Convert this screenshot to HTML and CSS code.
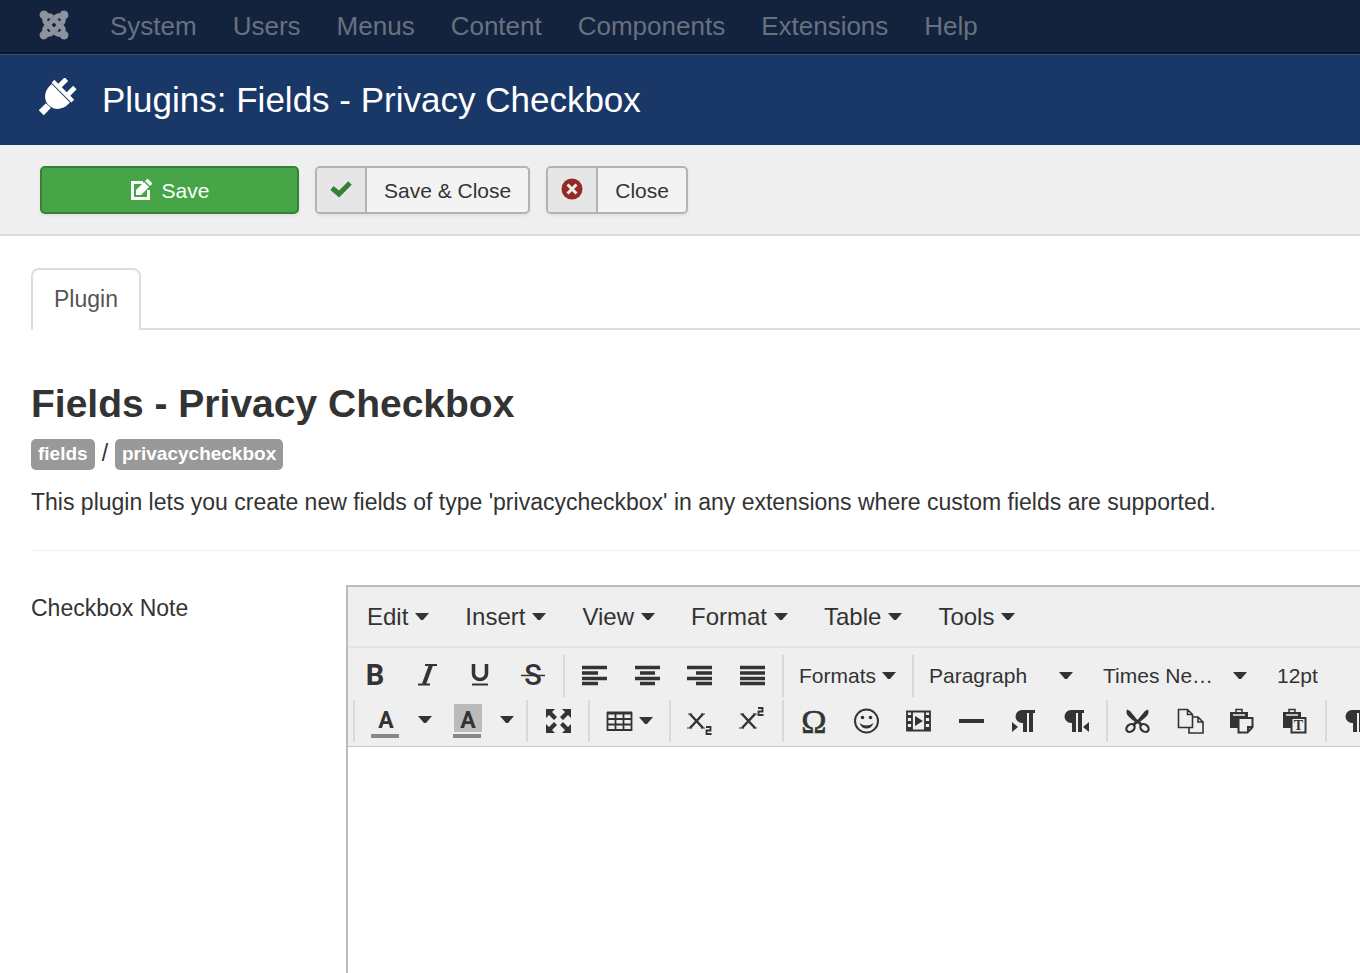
FILE: index.html
```html
<!DOCTYPE html>
<html lang="en">
<head>
<meta charset="utf-8">
<title>Plugins: Fields - Privacy Checkbox</title>
<link rel="stylesheet" href="styles.css">
</head>
<body>
<svg class="defs" aria-hidden="true">
  <symbol id="caret" viewBox="0 0 14 8"><path d="M0 0h14L8 7H6z"/></symbol>
  <symbol id="pilcrow" viewBox="0 0 20 22"><path d="M7 0h13v3h-2v19h-4V3h-2v19H8v-9H7A6.5 6.5 0 0 1 7 0z"/></symbol>
</svg>

<nav class="navbar" aria-label="Main">
  <a class="brand" href="#" aria-label="Joomla">
    <svg width="30" height="30" viewBox="-1 -1 26 26">
      <g id="arm"><path d="M16.719 14.759L14.22 17.26l-2.37 2.37-.462.466c-1.368 1.365-3.297 1.83-5.047 1.397-.327 1.424-1.604 2.49-3.13 2.49C1.438 23.983 0 22.547 0 20.772c0-1.518 1.055-2.789 2.469-3.123-.446-1.76.016-3.705 1.396-5.08l.179-.18 2.37 2.37-.184.181c-.769.779-.769 2.024 0 2.789.771.78 2.022.78 2.787 0l.465-.465 2.367-2.371 2.502-2.506z"/></g>
      <use href="#arm" transform="rotate(90 12 12)"/><use href="#arm" transform="rotate(180 12 12)"/><use href="#arm" transform="rotate(270 12 12)"/>
    </svg>
  </a>
  <a href="#">System</a><a href="#">Users</a><a href="#">Menus</a><a href="#">Content</a><a href="#">Components</a><a href="#">Extensions</a><a href="#">Help</a>
</nav>

<header class="header">
  <svg width="38" height="38" viewBox="0 0 38 38" aria-hidden="true">
    <g transform="translate(3 34) rotate(45)" fill="#fff">
      <path d="M-3.500 1v-10h7V1z"/>
      <path d="M-13-26.500h26v3c0 8-6 14-13 14s-13-6-13-14z"/>
      <path d="M-14-31.500h5.500v-9h5v9h7v-9h5v9H14v4h-28z"/>
    </g>
  </svg>
  <h1>Plugins: Fields - Privacy Checkbox</h1>
</header>

<div class="actions">
  <button class="btn btn-save" type="button">
    <svg width="22" height="22" viewBox="0 0 22 22" aria-hidden="true"><path d="M13 3.500H2.500V19.500H18.500V11" fill="none" stroke="#fff" stroke-width="3"/><path d="M6 16v-5l8-8 5 5-8 8zM15 2l2-2h1l4 4v1l-2 2z" fill="#fff"/></svg>
    <span>Save</span>
  </button>
  <button class="btn btn-split" type="button">
    <span class="btn-icon"><svg width="22" height="22" viewBox="0 0 22 22" aria-hidden="true"><path d="M2 10l7 6L20 5" fill="none" stroke="#378137" stroke-width="5"/></svg></span>
    <span class="btn-text">Save &amp; Close</span>
  </button>
  <button class="btn btn-split" type="button">
    <span class="btn-icon"><svg width="22" height="22" viewBox="0 0 22 22" aria-hidden="true"><circle cx="11" cy="11" r="10.500" fill="#942a25"/><path d="M6.500 6.500l9 9M15.500 6.500l-9 9" stroke="#eee" stroke-width="3"/></svg></span>
    <span class="btn-text">Close</span>
  </button>
</div>

<main class="content">
  <div class="tabs"><a class="tab" href="#">Plugin</a></div>
  <h2>Fields - Privacy Checkbox</h2>
  <div class="crumbs"><span class="badge">fields</span><span class="slash">/</span><span class="badge">privacycheckbox</span></div>
  <p class="desc">This plugin lets you create new fields of type 'privacycheckbox' in any extensions where custom fields are supported.</p>
  <hr>
  <div class="field">
    <label for="note">Checkbox Note</label>
    <div class="editor">
      <div class="menubar">
        <button type="button">Edit<svg class="caret"><use href="#caret"/></svg></button>
        <button type="button">Insert<svg class="caret"><use href="#caret"/></svg></button>
        <button type="button">View<svg class="caret"><use href="#caret"/></svg></button>
        <button type="button">Format<svg class="caret"><use href="#caret"/></svg></button>
        <button type="button">Table<svg class="caret"><use href="#caret"/></svg></button>
        <button type="button">Tools<svg class="caret"><use href="#caret"/></svg></button>
      </div>
      <div class="toolbar">
        <div class="row">
          <div class="group group-first">
            <button type="button" aria-label="Bold"><svg class="ico" viewBox="0 0 28 28"><text x="15" y="23" class="g-b">B</text></svg></button>
            <button type="button" aria-label="Italic"><svg class="ico" viewBox="0 0 28 28"><path d="M12 3h12M5 22.500h12" stroke-width="2"/><path d="M18 3L11 22" stroke-width="4"/></svg></button>
            <button type="button" aria-label="Underline"><svg class="ico" viewBox="0 0 28 28"><path d="M7.500 2v9.500a6.500 6 0 0 0 13 0V2" stroke-width="3.500"/><path d="M6 22.500h16" stroke-width="2"/></svg></button>
            <button type="button" aria-label="Strikethrough"><svg class="ico" viewBox="0 0 28 28"><text x="14" y="23" class="g-s">S</text><path d="M2 13.500h24" stroke-width="1.500"/></svg></button>
          </div>
          <div class="group n4">
            <button type="button" aria-label="Align left"><svg class="ico" viewBox="0 0 28 28"><path d="M2 5.500h25M2 11h16M2 16.500h25M2 21.500h16" stroke-width="3.500"/></svg></button>
            <button type="button" aria-label="Align center"><svg class="ico" viewBox="0 0 28 28"><path d="M2 5.500h25M7 11h15M2 16.500h25M7 21.500h15" stroke-width="3.500"/></svg></button>
            <button type="button" aria-label="Align right"><svg class="ico" viewBox="0 0 28 28"><path d="M2 5.500h25M11 11h16M2 16.500h25M11 21.500h16" stroke-width="3.500"/></svg></button>
            <button type="button" aria-label="Justify"><svg class="ico" viewBox="0 0 28 28"><path d="M2 5.500h25M2 11h25M2 16.500h25M2 21.500h25" stroke-width="3.500"/></svg></button>
          </div>
          <div class="group formats"><button type="button">Formats<svg class="caret"><use href="#caret"/></svg></button></div>
          <div class="group">
            <div class="listbox"><select aria-label="Block format"><option>Paragraph</option></select><svg class="caret"><use href="#caret"/></svg></div>
            <div class="listbox"><select aria-label="Font family"><option>Times Ne…</option></select><svg class="caret"><use href="#caret"/></svg></div>
            <div class="listbox"><select aria-label="Font size"><option>12pt</option></select><svg class="caret"><use href="#caret"/></svg></div>
          </div>
        </div>
        <div class="row row-second">
          <div class="group colors">
            <button type="button" aria-label="Text color"><svg class="ico tall" viewBox="0 0 28 34"><text x="15" y="24" class="g-a">A</text><path d="M0 32h28" class="bar"/></svg></button>
            <button class="open" type="button" aria-label="Text color options"><svg class="caret"><use href="#caret"/></svg></button>
            <button type="button" aria-label="Background color"><svg class="ico tall" viewBox="0 0 28 34"><path d="M1 0h28v28H1z" class="swatch"/><text x="15" y="24" class="g-a">A</text><path d="M0 32h28" class="bar"/></svg></button>
            <button class="open" type="button" aria-label="Background color options"><svg class="caret"><use href="#caret"/></svg></button>
          </div>
          <div class="group n1">
            <button type="button" aria-label="Fullscreen"><svg class="ico" viewBox="0 0 28 28"><path d="M2 2h9L8 5l5 5-3 3-5-5-3 3zM27 2v9l-3-3-5 5-3-3 5-5-3-3zM2 26v-9l3 3 5-5 3 3-5 5 3 3zM27 26h-9l3-3-5-5 3-3 5 5 3-3z" class="fill"/></svg></button>
          </div>
          <div class="group table">
            <button type="button" aria-label="Table"><svg class="ico" viewBox="0 0 28 28"><path d="M2.500 6h24v17h-24zM2 12h25M2 17.500h25M10.500 6v17M18.500 6v17" stroke-width="1.800"/><path d="M2 6h25" stroke-width="3"/></svg><svg class="caret"><use href="#caret"/></svg></button>
          </div>
          <div class="group n2">
            <button type="button" aria-label="Subscript"><svg class="ico" viewBox="0 0 28 28"><path d="M4 7l13 14M17 7L4 21" stroke-width="2.500"/><path d="M2 7h4M15 7h4M1 21h5M15 21h4" stroke-width="1"/><path d="M20 20h4.500v3.500h-4V27h5" stroke-width="1.800"/></svg></button>
            <button type="button" aria-label="Superscript"><svg class="ico" viewBox="0 0 28 28"><path d="M4 7l13 14M17 7L4 21" stroke-width="2.500"/><path d="M2 7h4M15 7h4M1 21h5M15 21h4" stroke-width="1"/><path d="M20 1h4.500v3.500h-4V8h5" stroke-width="1.800"/></svg></button>
          </div>
          <div class="group n6">
            <button type="button" aria-label="Special character"><svg class="ico" viewBox="0 0 28 28"><text x="15" y="26" class="g-o">Ω</text></svg></button>
            <button type="button" aria-label="Emoticons"><svg class="ico" viewBox="0 0 28 28"><circle cx="14.500" cy="14" r="11.500" stroke-width="2"/><circle cx="10.500" cy="10.500" r="1.800" class="fill"/><circle cx="18.500" cy="10.500" r="1.800" class="fill"/><path d="M7.500 16q7 5 14 0q-2 5.500-7 5.500t-7-5.500z" class="fill"/></svg></button>
            <button type="button" aria-label="Media"><svg class="ico" viewBox="0 0 28 28"><path d="M3 4.500h23v19H3zM8 4v20M21 4v20" stroke-width="1.800"/><path d="M3 8h5v3H3zM3 14h5v3H3zM3 20h5v3H3zM21 8h5v3h-5zM21 14h5v3h-5zM21 20h5v3h-5zM11 9l8 5-8 5z" class="fill"/></svg></button>
            <button type="button" aria-label="Horizontal line"><svg class="ico" viewBox="0 0 28 28"><path d="M2 14h25" stroke-width="4"/></svg></button>
            <button type="button" aria-label="Left to right"><svg class="ico" viewBox="0 0 28 28"><use href="#pilcrow" x="6" y="3" width="20" height="22" class="fill"/><path d="M3 15l6 5-6 5z" class="fill"/></svg></button>
            <button type="button" aria-label="Right to left"><svg class="ico" viewBox="0 0 28 28"><use href="#pilcrow" x="2" y="3" width="20" height="22" class="fill"/><path d="M27 15l-6 5 6 5z" class="fill"/></svg></button>
          </div>
          <div class="group n4">
            <button type="button" aria-label="Cut"><svg class="ico" viewBox="0 0 28 28"><path d="M4 2.500l3 1.500 7.500 9L22 4l3-1.500c1.500 4 0 6.500-7.500 12h-6C4 9 2.500 6.500 4 2.500z" class="fill"/><ellipse cx="7.500" cy="21" rx="4.500" ry="3.500" transform="rotate(-40 7.500 21)" stroke-width="2.300"/><ellipse cx="21.500" cy="21" rx="4.500" ry="3.500" transform="rotate(40 21.500 21)" stroke-width="2.300"/><path d="M10.500 18l4-4M18.500 18l-4-4" stroke-width="3"/></svg></button>
            <button type="button" aria-label="Copy"><svg class="ico" viewBox="0 0 28 28"><path d="M2.500 2.500h9l5 5v13h-14zM11.500 2.500v5h5M17 10h5l5 5v11H13v-5.500M22 10v5h5" stroke-width="1.600"/></svg></button>
            <button type="button" aria-label="Paste"><svg class="ico" viewBox="0 0 28 28"><path d="M2 5h18v5h-7v11H2z" class="fill"/><path d="M8 6V2.500h6V6" stroke-width="1.500"/><path d="M5 8h12" stroke="#efefef" stroke-width="1.500"/><path d="M10.500 11h14v9l-5 5.500h-9zM25 20h-5v5" class="paper"/></svg></button>
            <button type="button" aria-label="Paste as text"><svg class="ico" viewBox="0 0 28 28"><path d="M2 5h18v5h-7v11H2z" class="fill"/><path d="M8 6V2.500h6V6" stroke-width="1.500"/><path d="M5 8h12" stroke="#efefef" stroke-width="1.500"/><path d="M10.500 11h14v14.500h-14z" class="paper"/><text x="17.500" y="23" class="g-t">T</text></svg></button>
          </div>
          <div class="group n1">
            <button type="button" aria-label="Show blocks"><svg class="ico" viewBox="0 0 28 28"><use href="#pilcrow" x="2" y="3" width="20" height="22" class="fill"/></svg></button>
          </div>
        </div>
      </div>
      <textarea id="note"></textarea>
    </div>
  </div>
</main>
</body>
</html>
```
FILE: styles.css
```css
* { box-sizing: border-box; }
body {
  margin: 0;
  min-height: 100vh;
  display: flex;
  flex-direction: column;
  background: #fff;
  color: #333;
  font: 23px/32px "Liberation Sans", Arial, sans-serif;
  overflow-x: hidden;
}
button, select, textarea { font: inherit; color: inherit; margin: 0; }
button { cursor: pointer; }
svg { display: block; flex: none; }
.defs { position: absolute; width: 0; height: 0; }

.navbar {
  display: flex;
  align-items: center;
  height: 54px;
  padding-left: 39px;
  background: #13233e;
  border-bottom: 2px solid #0c182a;
  font-size: 26px;
}
.navbar a { padding: 0 18px; color: #68717f; text-decoration: none; }
.navbar .brand { padding: 0 23px 2px 0; }
.brand svg { fill: #8d949f; stroke: #8d949f; stroke-width: 1; overflow: visible; }

.header {
  display: flex;
  align-items: center;
  gap: 25px;
  height: 91px;
  padding: 0 40px 0 39px;
  background: #1a3867;
  border-top: 1px solid #3c5478;
  color: #fff;
}
.header svg { margin-bottom: 6px; }
.header h1 { margin: 0; font-size: 35px; font-weight: 400; line-height: 40px; }

.actions {
  display: flex;
  gap: 16px;
  padding: 21px 40px 20px;
  background: #efefef;
  border-bottom: 2px solid #ddd;
}
.btn {
  display: flex;
  align-items: center;
  height: 48px;
  padding: 0;
  border: 2px solid #b3b3b3;
  border-radius: 5px;
  background: #f3f3f3;
  box-shadow: 0 2px 3px rgba(0, 0, 0, .06);
  font-size: 21px;
  line-height: 24px;
  overflow: hidden;
}
.btn-save {
  justify-content: center;
  gap: 10px;
  width: 259px;
  background: #46a546;
  border-color: #378137;
  color: #fff;
}
.btn-save span { padding-top: 1px; }
.btn-icon {
  display: flex;
  align-items: center;
  justify-content: center;
  align-self: stretch;
  width: 50px;
  padding-bottom: 2px;
  background: #e6e6e6;
  border-right: 2px solid #b3b3b3;
}
.btn-text { padding: 1px 17px 0; }

.content { flex: 1; display: flex; flex-direction: column; padding: 32px 0 0 31px; }
.tabs { display: flex; border-bottom: 2px solid #ddd; }
.tab {
  height: 62px;
  margin-bottom: -2px;
  padding: 13px 21px;
  background: #fff;
  border: 2px solid #ddd;
  border-bottom: 0;
  border-radius: 8px 8px 0 0;
  color: #555;
  text-decoration: none;
}
h2 { margin: 54px 0 0; font-size: 39px; line-height: 40px; }
.crumbs { display: flex; align-items: center; gap: 7px; margin-top: 15px; line-height: 24px; }
.slash { padding-bottom: 4px; }
.badge {
  height: 31px;
  padding: 3px 7px;
  border-radius: 5px;
  background: #999;
  color: #fff;
  font-size: 19px;
  font-weight: 700;
}
.desc { margin: 16px 0 0; }
hr { width: 100%; margin: 32px 0 34px; border: 0; border-top: 1px solid #eee; }

.field { flex: 1; display: flex; }
.field label { flex: none; width: 315px; padding-top: 7px; }
.editor {
  flex: 1;
  min-width: 0;
  display: flex;
  flex-direction: column;
  border: 2px solid #bbb;
  border-width: 2px 0 0 2px;
  overflow: hidden;
}
.editor button { border: 0; padding: 0; background: none; display: flex; align-items: center; justify-content: center; }
.caret { width: 14px; height: 8px; fill: #333; }
.menubar { display: flex; height: 61px; padding-left: 1px; background: #efefef; border-bottom: 2px solid #e3e3e3; font-size: 24px; }
.menubar button { gap: 7px; padding: 0 18px; }
.toolbar { padding: 7px 0 4px; background: #efefef; border-bottom: 1px solid #c5c5c5; font-size: 21px; }
.row { display: flex; height: 42px; }
.row-second { margin-top: 3px; padding-left: 5px; }
.group { display: flex; flex: none; padding: 0 4px 0 3px; border-left: 2px solid #d9d9d9; }
.group-first { width: 215px; padding: 0 4px 0 0; border-left: 0; }
.group > button { flex: 1; }
.n1 { width: 62px; }
.n2 { width: 113px; }
.n4 { width: 219px; }
.n6 { width: 324px; }
.formats { width: 130px; }
.formats button { gap: 6px; }
.colors { width: 173px; }
.colors .open { flex: 0 0 29px; padding: 0 2px 2px 0; }
.table { width: 81px; }
.table button { gap: 6px; }
.listbox { display: flex; align-items: center; flex: none; width: 174px; padding: 0 18px 0 12px; }
.listbox select { flex: 1; min-width: 0; height: 42px; padding: 0; border: 0; background: none; appearance: none; }

.ico { width: 28px; height: 28px; fill: none; stroke: #333; overflow: visible; }
.tall { height: 34px; }
.ico text, .ico .fill { fill: #333; stroke: none; }
.ico text { text-anchor: middle; font-family: Roboto, sans-serif; font-weight: 700; }
.ico .bar { stroke: #888; stroke-width: 4; }
.ico .swatch { fill: #bbb; stroke: none; }
.ico .paper { fill: #efefef; stroke-width: 2; }
.ico .g-b { font-size: 29px; }
.ico .g-s { font-size: 29px; font-weight: 500; }
.ico .g-a { font-size: 23px; }
.ico .g-o { font-size: 34px; font-family: "Liberation Serif", serif; font-weight: 400; stroke: #333; stroke-width: .6px; }
.ico .g-t { font-size: 14px; font-family: "Liberation Serif", serif; }
textarea { flex: 1; width: 100%; min-height: 224px; padding: 16px; border: 0; outline: 0; resize: none; background: #fff; }
```
